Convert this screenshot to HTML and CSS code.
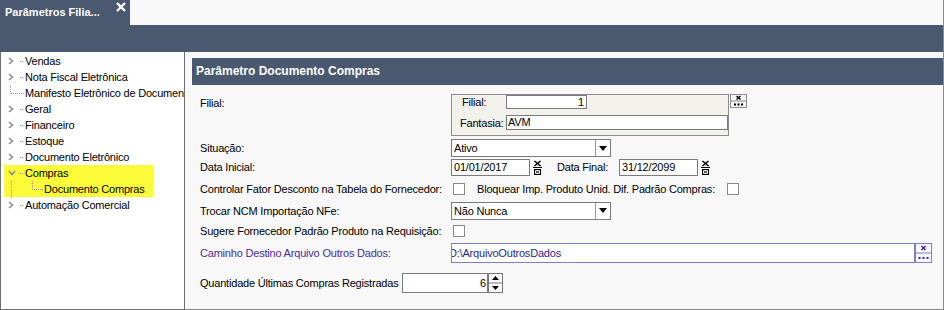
FILE: index.html
```html
<!DOCTYPE html>
<html lang="pt-BR">
<head>
    <meta charset="UTF-8">
    <title>Parâmetros Filial</title>
    <link rel="stylesheet" href="styles.css">
</head>
<body>
    <div class="window">
        <div class="tabstrip">
            <div class="tab">
                <span class="tab-title">Parâmetros Filia...</span>
                <svg class="tab-close" width="10" height="10" viewBox="0 0 10 10">
                    <path d="M1 1 L9 9 M9 1 L1 9" stroke="#fff" stroke-width="2.4"/>
                </svg>
            </div>
        </div>
        <div class="toolbar"></div>

        <div class="main">
            <!-- tree of parameter groups -->
            <div class="tree">
                <div class="node"><svg class="chev" width="6" height="8"><polyline points="1,1 4.5,4 1,7" fill="none" stroke="#8c8c8c" stroke-width="1.6"/></svg><span class="dots"></span>Vendas</div>
                <div class="node"><svg class="chev" width="6" height="8"><polyline points="1,1 4.5,4 1,7" fill="none" stroke="#8c8c8c" stroke-width="1.6"/></svg><span class="dots"></span>Nota Fiscal Eletrônica</div>
                <div class="node"><span class="leaf-line"></span>Manifesto Eletrônico de Documentos</div>
                <div class="node"><svg class="chev" width="6" height="8"><polyline points="1,1 4.5,4 1,7" fill="none" stroke="#8c8c8c" stroke-width="1.6"/></svg><span class="dots"></span>Geral</div>
                <div class="node"><svg class="chev" width="6" height="8"><polyline points="1,1 4.5,4 1,7" fill="none" stroke="#8c8c8c" stroke-width="1.6"/></svg><span class="dots"></span>Financeiro</div>
                <div class="node"><svg class="chev" width="6" height="8"><polyline points="1,1 4.5,4 1,7" fill="none" stroke="#8c8c8c" stroke-width="1.6"/></svg><span class="dots"></span>Estoque</div>
                <div class="node"><svg class="chev" width="6" height="8"><polyline points="1,1 4.5,4 1,7" fill="none" stroke="#8c8c8c" stroke-width="1.6"/></svg><span class="dots"></span>Documento Eletrônico</div>
                <div class="selected">
                    <div class="node"><svg class="chev-down" width="8" height="6"><polyline points="1,1 4,4.5 7,1" fill="none" stroke="#8c8c8c" stroke-width="1.6"/></svg><span class="dots"></span>Compras</div>
                    <div class="node"><span class="vline"></span><span class="corner"></span>Documento Compras</div>
                </div>
                <div class="node"><svg class="chev" width="6" height="8"><polyline points="1,1 4.5,4 1,7" fill="none" stroke="#8c8c8c" stroke-width="1.6"/></svg><span class="dots"></span>Automação Comercial</div>
            </div>

            <div class="content">
                <div class="section-title">Parâmetro Documento Compras</div>

                <div class="form">
                    <div class="row row-filial">
                        <div class="label">Filial:</div>
                        <div class="filial-box">
                            <div class="filial-line">
                                <span class="filial-lbl">Filial:</span>
                                <span class="input input-code">1</span>
                            </div>
                            <div class="filial-line">
                                <span class="fantasia-lbl">Fantasia:</span>
                                <span class="input input-name">AVM</span>
                            </div>
                        </div>
                        <svg class="lookup" width="17" height="14" viewBox="0 0 17 14">
                            <rect x="0.5" y="0.5" width="16" height="13" fill="#f4f4f4" stroke="#8c8c8c"/>
                            <path d="M0.5 7 H16.5" stroke="#8c8c8c"/>
                            <path d="M6.5 2 L10.5 5.5 M10.5 2 L6.5 5.5" stroke="#000" stroke-width="1.4"/>
                            <rect x="4" y="9.5" width="2" height="2" fill="#000"/>
                            <rect x="7.5" y="9.5" width="2" height="2" fill="#000"/>
                            <rect x="11" y="9.5" width="2" height="2" fill="#000"/>
                        </svg>
                    </div>

                    <div class="row row-18">
                        <div class="label">Situação:</div>
                        <div class="select">
                            <span class="select-text">Ativo</span>
                            <span class="select-btn"><svg width="8" height="5"><polygon points="0,0 8,0 4,5" fill="#000"/></svg></span>
                        </div>
                    </div>

                    <div class="row row-20">
                        <div class="label">Data Inicial:</div>
                        <span class="input input-date">01/01/2017</span>
                        <svg class="date-btn" width="16" height="17" viewBox="0 0 16 17">
                            <path d="M4.5 2 L10.5 7 M10.5 2 L4.5 7" stroke="#000" stroke-width="1.6"/>
                            <path d="M3 8.5 H12" stroke="#000" stroke-width="1"/>
                            <rect x="4.5" y="10.5" width="6" height="5" fill="#fff" stroke="#000" stroke-width="1"/>
                            <path d="M5.5 11.5 L9.5 14.5 M9.5 11.5 L5.5 14.5" stroke="#000" stroke-width="0.8"/>
                        </svg>
                        <span class="date-final-lbl">Data Final:</span>
                        <span class="input input-date">31/12/2099</span>
                        <svg class="date-btn" width="16" height="17" viewBox="0 0 16 17">
                            <path d="M4.5 2 L10.5 7 M10.5 2 L4.5 7" stroke="#000" stroke-width="1.6"/>
                            <path d="M3 8.5 H12" stroke="#000" stroke-width="1"/>
                            <rect x="4.5" y="10.5" width="6" height="5" fill="#fff" stroke="#000" stroke-width="1"/>
                            <path d="M5.5 11.5 L9.5 14.5 M9.5 11.5 L5.5 14.5" stroke="#000" stroke-width="0.8"/>
                        </svg>
                    </div>

                    <div class="row row-24">
                        <div class="label">Controlar Fator Desconto na Tabela do Fornecedor:</div>
                        <span class="check"></span>
                        <span class="check-lbl">Bloquear Imp. Produto Unid. Dif. Padrão Compras:</span>
                        <span class="check check-far"></span>
                    </div>

                    <div class="row row-19">
                        <div class="label">Trocar NCM Importação NFe:</div>
                        <div class="select">
                            <span class="select-text">Não Nunca</span>
                            <span class="select-btn"><svg width="8" height="5"><polygon points="0,0 8,0 4,5" fill="#000"/></svg></span>
                        </div>
                    </div>

                    <div class="row row-22">
                        <div class="label">Sugere Fornecedor Padrão Produto na Requisição:</div>
                        <span class="check"></span>
                    </div>

                    <div class="row row-21">
                        <div class="label label-link">Caminho Destino Arquivo Outros Dados:</div>
                        <span class="input input-path"><span class="path-text">D:\ArquivoOutrosDados</span></span>
                        <svg class="lookup" width="17" height="20" viewBox="0 0 17 20">
                            <rect x="0.5" y="0.5" width="16" height="19" fill="#f6f6fb" stroke="#8080c0"/>
                            <path d="M0.5 10 H16.5" stroke="#8080c0"/>
                            <path d="M6.5 3 L10.5 7 M10.5 3 L6.5 7" stroke="#4b22a8" stroke-width="1.6"/>
                            <rect x="3.5" y="14" width="2" height="2" fill="#4b22a8"/>
                            <rect x="7.5" y="14" width="2" height="2" fill="#4b22a8"/>
                            <rect x="11.5" y="14" width="2" height="2" fill="#4b22a8"/>
                        </svg>
                    </div>

                    <div class="row row-qtd">
                        <span class="qtd-lbl">Quantidade Últimas Compras Registradas</span>
                        <span class="input input-qtd">6</span>
                        <svg class="spin" width="15" height="20" viewBox="0 0 15 20">
                            <rect x="0.5" y="0.5" width="14" height="19" fill="#fff" stroke="#777"/>
                            <path d="M1 10 H14" stroke="#777"/>
                            <polygon points="4,7 11,7 7.5,3" fill="#000"/>
                            <polygon points="4,13 11,13 7.5,17" fill="#000"/>
                        </svg>
                    </div>
                </div>
            </div>
        </div>
    </div>
</body>
</html>
```

FILE: styles.css
```css
body {
    margin: 0;
    font-family: 'Liberation Sans', Arial, sans-serif;
    font-size: 11px;
    letter-spacing: -0.2px;
    color: #000;
    background-color: #f8f8f8;
    width: 944px;
    height: 310px;
    overflow: hidden;
}

.window {
    height: 310px;
    display: flex;
    flex-direction: column;
    border-right: 1px solid #8a8a8a;
    box-sizing: border-box;
}

.tabstrip {
    height: 25px;
    display: flex;
    background-color: #f8f8f8;
}

.tab {
    width: 130px;
    background-color: #4a5870;
    color: #fff;
    font-weight: bold;
    display: flex;
    align-items: flex-start;
}

.tab-title {
    padding: 6px 0 0 5px;
    letter-spacing: 0;
}

.tab-close {
    margin: 2px 4px 0 auto;
}

.toolbar {
    height: 27px;
    background-color: #4a5870;
}

.main {
    flex: 1;
    display: flex;
    min-height: 0;
}

/* tree */
.tree {
    width: 185px;
    box-sizing: border-box;
    background-color: #fff;
    border-left: 1px solid #6e6e6e;
    border-right: 1px solid #6e6e6e;
    border-bottom: 1px solid #6e6e6e;
    padding-top: 1px;
    overflow: hidden;
}

.node {
    height: 16px;
    display: flex;
    align-items: center;
    white-space: nowrap;
}

.chev {
    margin-left: 7px;
    flex: none;
}

.chev-down {
    margin-left: 4px;
    flex: none;
}

.dots {
    width: 3px;
    margin: 1px 2px 0 6px;
    border-top: 1px dotted #9a9a9a;
    flex: none;
}

.chev-down + .dots {
    margin-left: 4px;
}

.leaf-line {
    align-self: flex-start;
    width: 13px;
    height: 8px;
    margin: 0 1px 0 9px;
    border-left: 1px dotted #9a9a9a;
    border-bottom: 1px dotted #9a9a9a;
    flex: none;
}

.selected {
    margin-left: 3px;
    width: 149px;
    background-color: #fbfb3a;
}

.vline {
    align-self: stretch;
    width: 0;
    margin-left: 7px;
    border-left: 1px dotted #9a9a9a;
    flex: none;
}

.corner {
    align-self: flex-start;
    width: 10px;
    height: 8px;
    margin: 0 1px 0 20px;
    border-left: 1px dotted #9a9a9a;
    border-bottom: 1px dotted #9a9a9a;
    flex: none;
}

/* right side */
.content {
    flex: 1;
    background-color: #f8f8f8;
    border-bottom: 1px solid #8a8a8a;
    padding-top: 6px;
}

.section-title {
    margin-left: 7px;
    height: 27px;
    line-height: 27px;
    padding-left: 4px;
    background-color: #4a5870;
    color: #fff;
    font-weight: bold;
    font-size: 12px;
    letter-spacing: 0;
}

.form {
    padding: 9px 0 0 15px;
}

.row {
    display: flex;
    align-items: center;
}

.label {
    width: 251px;
    flex: none;
    white-space: nowrap;
}

.label-link {
    color: #4b2c9c;
}

.row-18 { height: 18px; }
.row-19 { height: 19px; }
.row-20 { height: 20px; }
.row-21 { height: 21px; }
.row-22 { height: 22px; }
.row-24 { height: 24px; }

.row-filial {
    align-items: flex-start;
    height: 45px;
}

.row-filial .label {
    padding-top: 3px;
}

.filial-box {
    width: 278px;
    height: 42px;
    box-sizing: border-box;
    border: 1px solid #8c8c8c;
    background-color: #f2f1ec;
}

.filial-line {
    display: flex;
    align-items: center;
}

.filial-lbl {
    margin-left: 10px;
    width: 44px;
}

.fantasia-lbl {
    margin-left: 8px;
    width: 46px;
}

.filial-line + .filial-line {
    margin-top: 6px;
}

.input {
    display: inline-block;
    box-sizing: border-box;
    background-color: #fff;
    border: 1px solid #7a7a7a;
    padding: 0 2px;
    white-space: nowrap;
    overflow: hidden;
}

.input-code {
    width: 81px;
    height: 14px;
    line-height: 12px;
    text-align: right;
}

.input-name {
    width: 222px;
    height: 15px;
    line-height: 13px;
    padding-left: 1px;
}

.lookup {
    flex: none;
}

.row-filial .lookup {
    margin-left: 1px;
}

.select {
    width: 160px;
    height: 18px;
    box-sizing: border-box;
    border: 1px solid #7a7a7a;
    background-color: #fff;
    display: flex;
}

.select-text {
    flex: 1;
    padding-left: 2px;
    line-height: 16px;
}

.select-btn {
    width: 14px;
    border-left: 1px solid #9a9a9a;
    display: flex;
    align-items: center;
    justify-content: center;
}

.input-date {
    width: 79px;
    height: 17px;
    line-height: 15px;
}

.date-btn {
    flex: none;
}

.date-final-lbl {
    width: 62px;
    margin-left: 11px;
}

.check {
    width: 12px;
    height: 12px;
    box-sizing: border-box;
    border: 1px solid #8a8a8a;
    background-color: #fff;
    margin-left: 2px;
    flex: none;
}

.check-lbl {
    margin-left: 12px;
    width: 250px;
    white-space: nowrap;
}

.check-far {
    margin-left: 0;
}

.input-path {
    width: 464px;
    height: 20px;
    line-height: 18px;
    border-color: #8080c0;
    color: #2c1f8c;
    padding: 0;
}

.path-text {
    margin-left: -3px;
}

.row-qtd {
    margin-top: 9px;
    height: 21px;
}

.qtd-lbl {
    width: 202px;
    flex: none;
}

.input-qtd {
    width: 86px;
    height: 20px;
    line-height: 18px;
    text-align: right;
    padding-right: 1px;
}

.spin {
    flex: none;
}
```
